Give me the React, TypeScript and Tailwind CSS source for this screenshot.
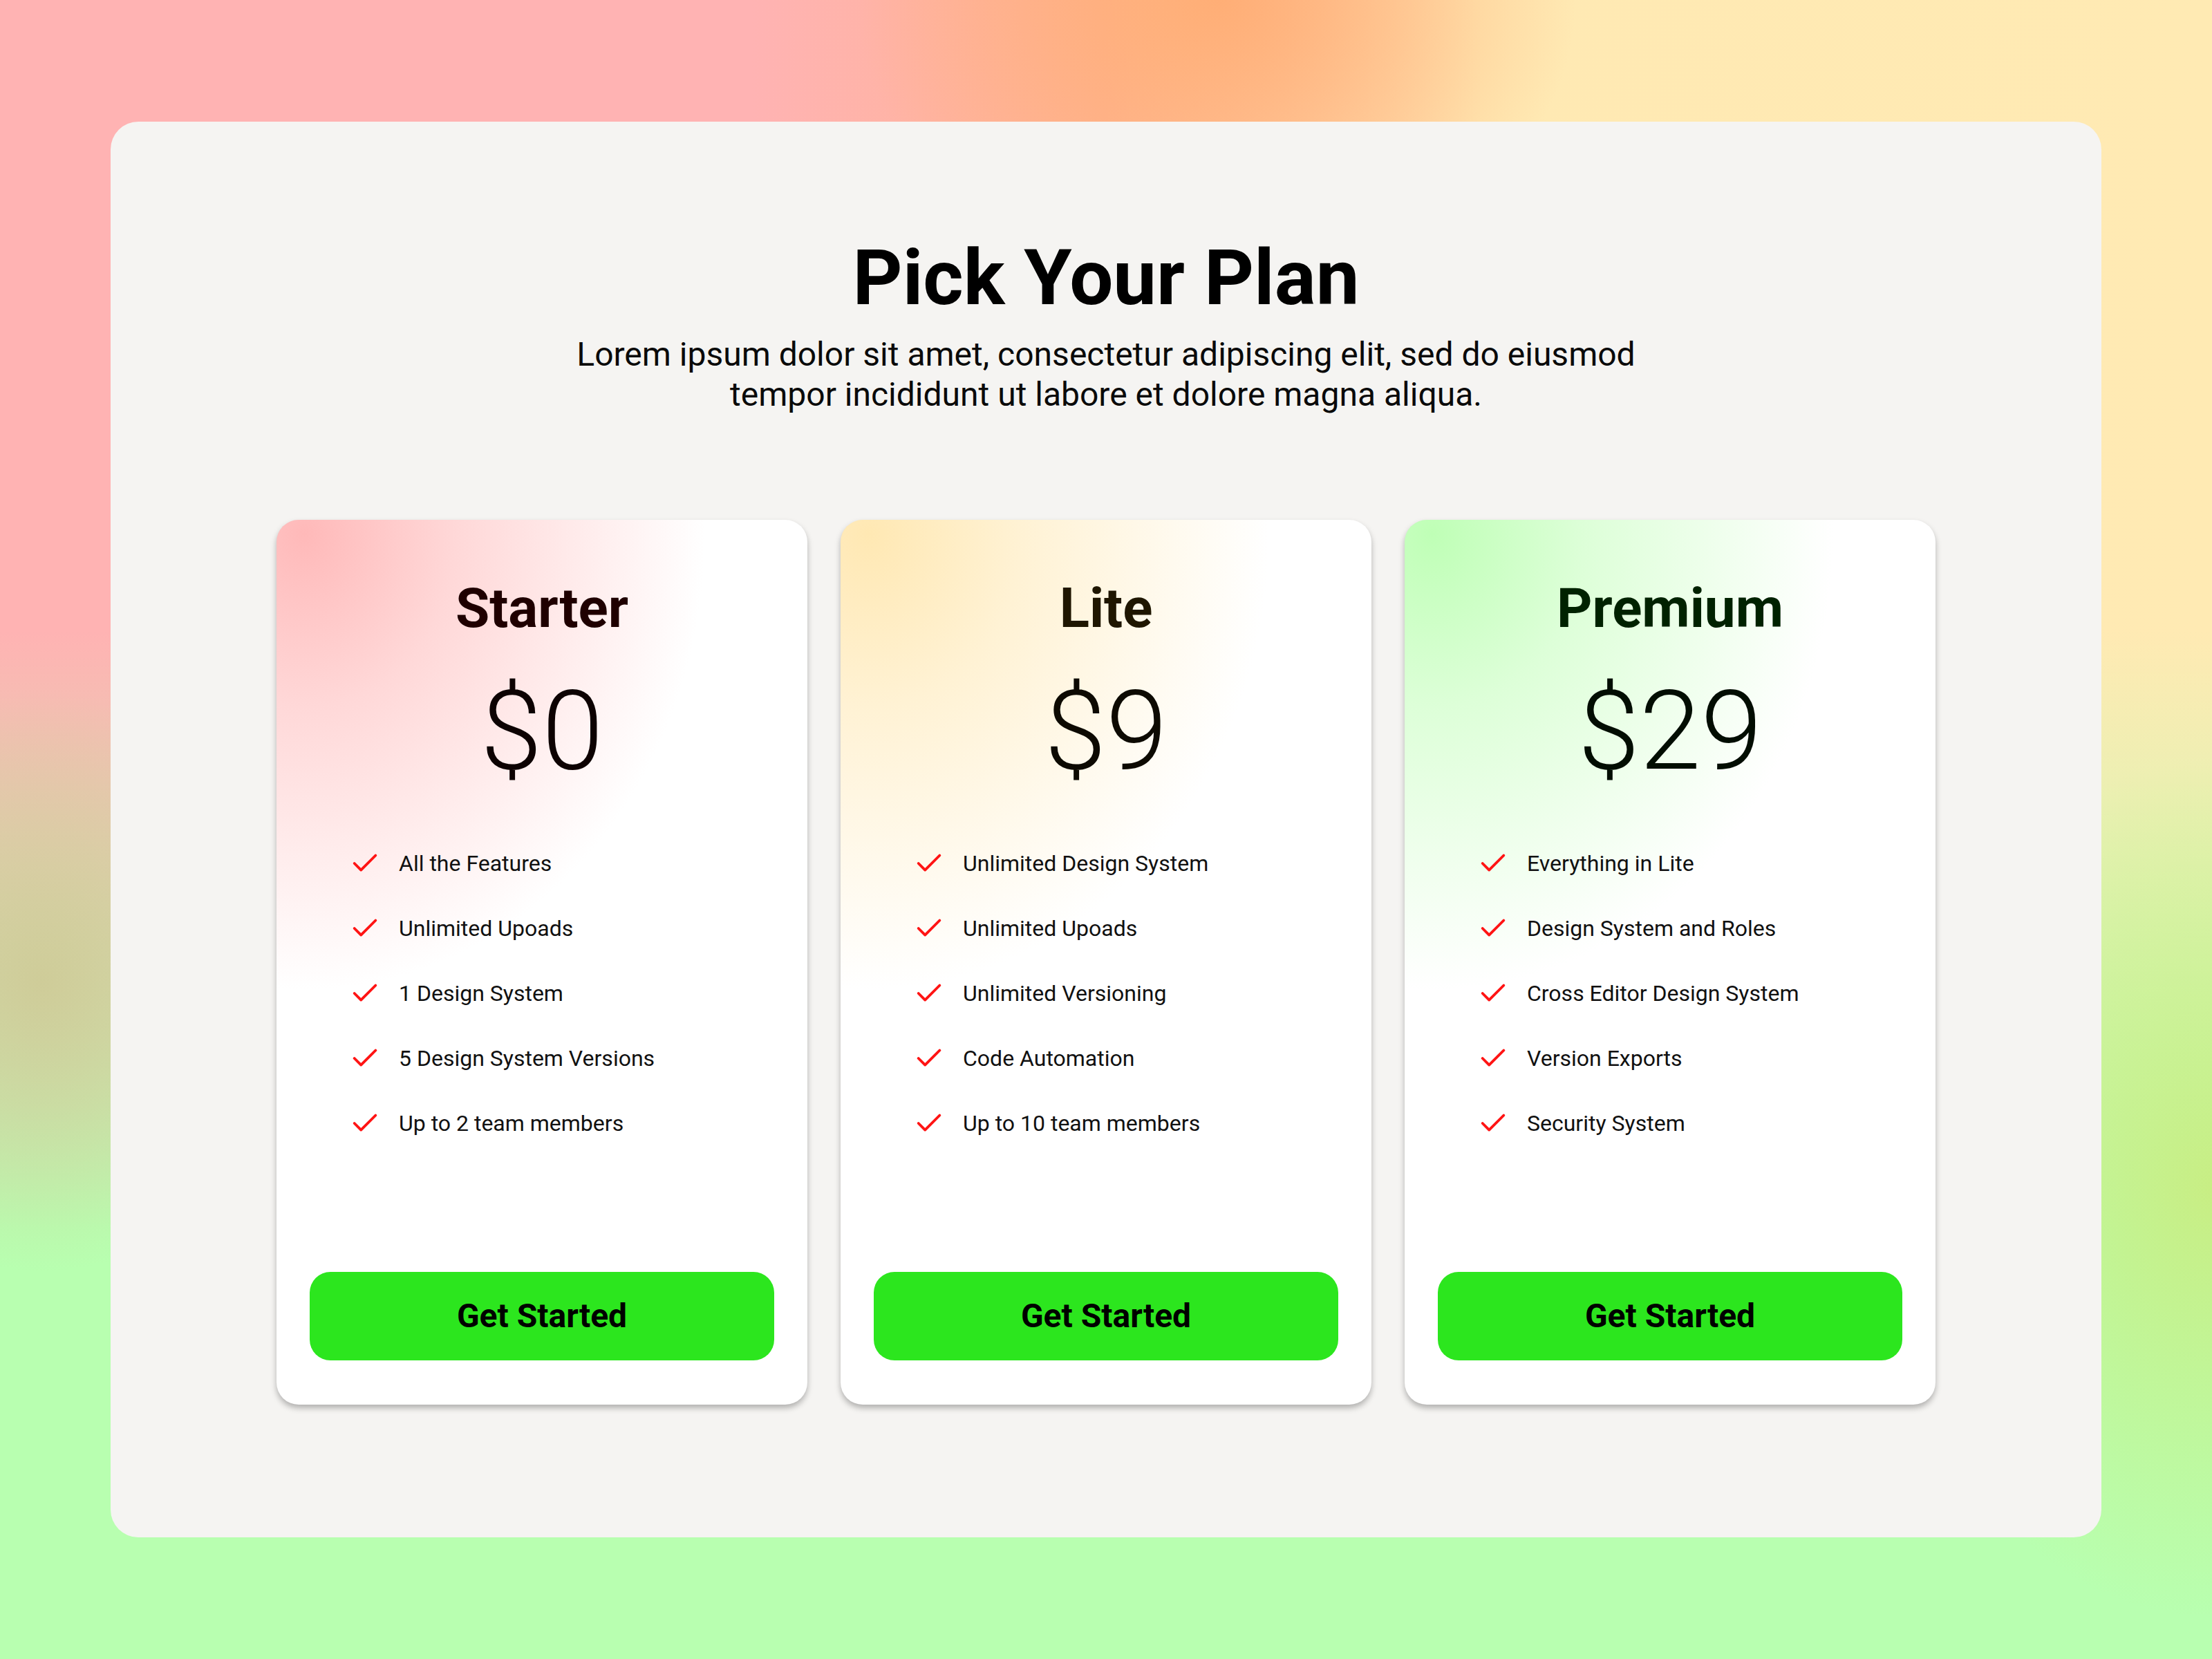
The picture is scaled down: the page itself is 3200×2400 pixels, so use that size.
import React from 'react';
import { Check } from 'lucide-react';

interface Plan {
  name: string;
  price: string;
  features: string[];
  glow: string;
  titleColor: string;
  priceColor: string;
}

const plans: Plan[] = [
  {
    name: 'Starter',
    price: '$0',
    features: ['All the Features', 'Unlimited Upoads', '1 Design System', '5 Design System Versions', 'Up to 2 team members'],
    glow: 'bg-[radial-gradient(ellipse_580px_660px_at_40px_20px,#ffb9b9_0%,#ffd8d8_38%,rgba(255,255,255,0)_100%)]',
    titleColor: 'text-[#1f0000]',
    priceColor: 'text-[#0d0202]',
  },
  {
    name: 'Lite',
    price: '$9',
    features: ['Unlimited Design System', 'Unlimited Upoads', 'Unlimited Versioning', 'Code Automation', 'Up to 10 team members'],
    glow: 'bg-[radial-gradient(ellipse_580px_660px_at_40px_20px,#ffe8b3_0%,#fff2d4_38%,rgba(255,255,255,0)_100%)]',
    titleColor: 'text-[#1f1600]',
    priceColor: 'text-[#0d0a02]',
  },
  {
    name: 'Premium',
    price: '$29',
    features: ['Everything in Lite', 'Design System and Roles', 'Cross Editor Design System', 'Version Exports', 'Security System'],
    glow: 'bg-[radial-gradient(ellipse_580px_660px_at_40px_20px,#bfffb6_0%,#ddffd8_38%,rgba(255,255,255,0)_100%)]',
    titleColor: 'text-[#002200]',
    priceColor: 'text-[#020d02]',
  },
];

const PlanCard: React.FC<{ plan: Plan }> = ({ plan }) => (
  <div
    className={`w-[768px] h-[1280px] rounded-[32px] bg-white ${plan.glow} shadow-[0_5px_9px_rgba(0,0,0,0.28)] flex flex-col items-center pt-[88px] pb-[64px] px-[48px]`}
  >
    <h2 className={`text-[80px] leading-none font-bold ${plan.titleColor}`}>{plan.name}</h2>
    <div className={`mt-[58px] text-[160px] leading-none font-light ${plan.priceColor}`}>{plan.price}</div>

    <ul className="mt-[88px] self-stretch pl-[57px] flex flex-col gap-[48px]">
      {plan.features.map(f => (
        <li key={f} className="flex items-center gap-[26px] h-[46px]">
          <Check size={46} strokeWidth={2} className="text-[#ff1414] shrink-0" />
          <span className="text-[32px] leading-[46px] text-[#111111]">{f}</span>
        </li>
      ))}
    </ul>

    <button className="mt-auto w-full h-[128px] rounded-[30px] bg-[#2ce61e] text-[48px] font-bold text-black">
      Get Started
    </button>
  </div>
);

export default function App() {
  return (
    <div
      className="w-[3200px] h-[2400px] pt-[176px] px-[160px] font-['Roboto','Liberation_Sans',sans-serif] bg-[radial-gradient(ellipse_520px_420px_at_1760px_0px,rgba(255,174,118,1)_0%,rgba(255,176,124,0)_100%),radial-gradient(ellipse_480px_620px_at_3200px_1720px,rgba(200,238,132,1)_0%,rgba(200,238,132,0)_100%),radial-gradient(ellipse_380px_420px_at_60px_1420px,rgba(206,202,150,0.9)_0%,rgba(206,202,150,0)_100%),linear-gradient(to_bottom,rgba(184,255,176,0)_38%,#b8ffb0_74%),linear-gradient(to_right,#ffb3b3_0%,#ffb3b3_34%,#ffb494_50%,#ffe9b3_67%,#ffeab3_100%)]"
    >
      <div className="h-[2048px] rounded-[40px] bg-[#f5f4f2] flex flex-col items-center pt-[162px]">
        <h1 className="text-[112px] leading-[128px] font-bold text-black">Pick Your Plan</h1>
        <p className="mt-[18px] text-[48px] leading-[1.2] text-center text-[#0a0a0a]">
          Lorem ipsum dolor sit amet, consectetur adipiscing elit, sed do eiusmod
          <br />
          tempor incididunt ut labore et dolore magna aliqua.
        </p>

        <div className="mt-[153px] flex gap-[48px]">
          {plans.map(p => (
            <PlanCard key={p.name} plan={p} />
          ))}
        </div>
      </div>
    </div>
  );
}
